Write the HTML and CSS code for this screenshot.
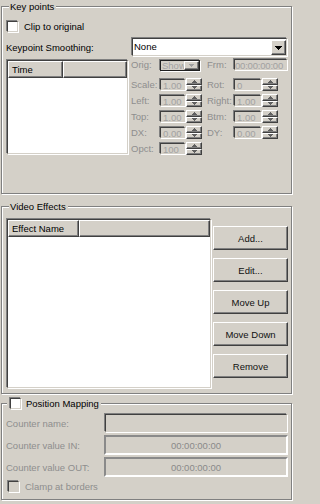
FILE: index.html
```html
<!DOCTYPE html>
<html>
<head>
<meta charset="utf-8">
<link rel="stylesheet" href="styles.css">
</head>
<body>
<div class="dlg">
  <div class="group kp">
    <div class="gtitle"><span>Key points</span></div>
    <div class="chkrow"><span class="chk sunken"></span><span>Clip to original</span></div>
    <div class="smooth-row">
      <span>Keypoint Smoothing:</span>
      <div class="dropdown sunken">
        <span class="dd-text">None</span>
        <span class="dd-btn raised"><svg width="7" height="4" viewBox="0 0 7 4"><path d="M0 0H7V1H6V2H5V3H4V4H3V3H2V2H1V1H0Z" fill="#000"/></svg></span>
      </div>
    </div>
    <div class="kp-main">
      <div class="list time-list sunken">
        <div class="lhead"><span class="hcell raised time-col">Time</span><span class="hcell raised hrest"></span></div>
      </div>
      <div class="props">
        <span class="plabel">Orig:</span>
        <div class="mini-combo sunken"><span class="val mc-text">Show</span><span class="mc-btn raised"><svg width="5" height="3" viewBox="0 0 5 3"><path d="M0 0H5V1H4V2H3V3H2V2H1V1H0Z" fill="#a0a0a0"/></svg></span></div>
        <span class="plabel pl2">Frm:</span>
        <div class="field frm sunken"><span class="val">00:00:00:00</span></div>

        <span class="plabel">Scale:</span>
        <div class="spin"><span class="spin-val sunken"><span class="val">1,00</span></span><span class="sb"><i class="raised"><svg width="5" height="3" viewBox="0 0 5 3"><path d="M2 0H3V1H4V2H5V3H0V2H1V1H2Z" fill="#606060"/></svg></i><i class="raised"><svg width="5" height="3" viewBox="0 0 5 3"><path d="M0 0H5V1H4V2H3V3H2V2H1V1H0Z" fill="#606060"/></svg></i></span></div>
        <span class="plabel pl2">Rot:</span>
        <div class="spin wide"><span class="spin-val sunken"><span class="val">0</span></span><span class="sb"><i class="raised"><svg width="5" height="3" viewBox="0 0 5 3"><path d="M2 0H3V1H4V2H5V3H0V2H1V1H2Z" fill="#606060"/></svg></i><i class="raised"><svg width="5" height="3" viewBox="0 0 5 3"><path d="M0 0H5V1H4V2H3V3H2V2H1V1H0Z" fill="#606060"/></svg></i></span></div>

        <span class="plabel">Left:</span>
        <div class="spin"><span class="spin-val sunken"><span class="val">1,00</span></span><span class="sb"><i class="raised"><svg width="5" height="3" viewBox="0 0 5 3"><path d="M2 0H3V1H4V2H5V3H0V2H1V1H2Z" fill="#606060"/></svg></i><i class="raised"><svg width="5" height="3" viewBox="0 0 5 3"><path d="M0 0H5V1H4V2H3V3H2V2H1V1H0Z" fill="#606060"/></svg></i></span></div>
        <span class="plabel pl2">Right:</span>
        <div class="spin wide"><span class="spin-val sunken"><span class="val">1,00</span></span><span class="sb"><i class="raised"><svg width="5" height="3" viewBox="0 0 5 3"><path d="M2 0H3V1H4V2H5V3H0V2H1V1H2Z" fill="#606060"/></svg></i><i class="raised"><svg width="5" height="3" viewBox="0 0 5 3"><path d="M0 0H5V1H4V2H3V3H2V2H1V1H0Z" fill="#606060"/></svg></i></span></div>

        <span class="plabel">Top:</span>
        <div class="spin"><span class="spin-val sunken"><span class="val">1,00</span></span><span class="sb"><i class="raised"><svg width="5" height="3" viewBox="0 0 5 3"><path d="M2 0H3V1H4V2H5V3H0V2H1V1H2Z" fill="#606060"/></svg></i><i class="raised"><svg width="5" height="3" viewBox="0 0 5 3"><path d="M0 0H5V1H4V2H3V3H2V2H1V1H0Z" fill="#606060"/></svg></i></span></div>
        <span class="plabel pl2">Btm:</span>
        <div class="spin wide"><span class="spin-val sunken"><span class="val">1,00</span></span><span class="sb"><i class="raised"><svg width="5" height="3" viewBox="0 0 5 3"><path d="M2 0H3V1H4V2H5V3H0V2H1V1H2Z" fill="#606060"/></svg></i><i class="raised"><svg width="5" height="3" viewBox="0 0 5 3"><path d="M0 0H5V1H4V2H3V3H2V2H1V1H0Z" fill="#606060"/></svg></i></span></div>

        <span class="plabel">DX:</span>
        <div class="spin"><span class="spin-val sunken"><span class="val">0,00</span></span><span class="sb"><i class="raised"><svg width="5" height="3" viewBox="0 0 5 3"><path d="M2 0H3V1H4V2H5V3H0V2H1V1H2Z" fill="#606060"/></svg></i><i class="raised"><svg width="5" height="3" viewBox="0 0 5 3"><path d="M0 0H5V1H4V2H3V3H2V2H1V1H0Z" fill="#606060"/></svg></i></span></div>
        <span class="plabel pl2">DY:</span>
        <div class="spin wide"><span class="spin-val sunken"><span class="val">0,00</span></span><span class="sb"><i class="raised"><svg width="5" height="3" viewBox="0 0 5 3"><path d="M2 0H3V1H4V2H5V3H0V2H1V1H2Z" fill="#606060"/></svg></i><i class="raised"><svg width="5" height="3" viewBox="0 0 5 3"><path d="M0 0H5V1H4V2H3V3H2V2H1V1H0Z" fill="#606060"/></svg></i></span></div>

        <span class="plabel">Opct:</span>
        <div class="spin"><span class="spin-val sunken"><span class="val">100</span></span><span class="sb"><i class="raised"><svg width="5" height="3" viewBox="0 0 5 3"><path d="M2 0H3V1H4V2H5V3H0V2H1V1H2Z" fill="#606060"/></svg></i><i class="raised"><svg width="5" height="3" viewBox="0 0 5 3"><path d="M0 0H5V1H4V2H3V3H2V2H1V1H0Z" fill="#606060"/></svg></i></span></div>
      </div>
    </div>
  </div>

  <div class="group ve">
    <div class="gtitle"><span>Video Effects</span></div>
    <div class="ve-main">
      <div class="list ve-list sunken">
        <div class="lhead"><span class="hcell raised effect-col">Effect Name</span><span class="hcell raised hrest"></span></div>
      </div>
      <div class="btns">
        <div class="btn raised">Add...</div>
        <div class="btn raised">Edit...</div>
        <div class="btn raised">Move Up</div>
        <div class="btn raised">Move Down</div>
        <div class="btn raised">Remove</div>
      </div>
    </div>
  </div>

  <div class="group pm">
    <div class="gtitle pm-title"><span class="chk sunken"></span><span>Position Mapping</span></div>
    <div class="pm-row"><span class="dlabel">Counter name:</span><div class="pfield first sunken"></div></div>
    <div class="pm-row"><span class="dlabel">Counter value IN:</span><div class="pfield flat"><span>00:00:00:00</span></div></div>
    <div class="pm-row"><span class="dlabel">Counter value OUT:</span><div class="pfield flat"><span>00:00:00:00</span></div></div>
    <div class="chkrow clamp"><span class="chk dis sunken"></span><span class="dlabel">Clamp at borders</span></div>
  </div>
</div>
</body>
</html>
```

FILE: styles.css
```css
* { box-sizing: border-box; }
html, body { margin: 0; padding: 0; }
body {
  width: 294px;
  height: 504px;
  overflow: hidden;
  background: #d4d0c8;
  font-family: "Liberation Sans", Arial, sans-serif;
  font-size: 9.5px;
  color: #000;
}
.dlg { padding: 6px 0 0 1px; }

.group {
  position: relative;
  width: 291px;
  border: 1px solid #808080;
  box-shadow: inset 1px 1px 0 #fff, 1px 1px 0 #fff;
}
.gtitle {
  position: absolute;
  top: -7px;
  left: 7px;
  height: 13px;
  padding: 0 2px 0 1px;
  background: #d4d0c8;
  display: flex;
  align-items: center;
  line-height: 13px;
  white-space: nowrap;
}
.pm-title { left: 5px; padding-left: 2px; }
.pm-title .chk { margin-right: 5px; }

.sunken {
  border: 1px solid;
  border-color: #404040 #d4d0c8 #d4d0c8 #404040;
  box-shadow: -1px -1px 0 #808080, 1px 1px 0 #fff;
  margin: 1px;
}
.raised {
  border: 1px solid;
  border-color: #fff #404040 #404040 #fff;
  box-shadow: inset -1px -1px 0 #808080;
  background: #d4d0c8;
}

.chk { width: 11px; height: 11px; background: #fff; flex: none; }
.chk.dis { background: #d4d0c8; }

/* Key points */
.kp { height: 188px; padding: 13px 3px 0 4px; }
.chkrow { display: flex; align-items: center; height: 13px; }
.chkrow .chk { margin-right: 6px; }

.smooth-row {
  margin-top: 4px;
  height: 20px;
  display: flex;
  align-items: center;
  justify-content: space-between;
}
.dropdown {
  width: 155px;
  height: 18px;
  background: #fff;
  display: flex;
  justify-content: space-between;
  padding-left: 1px;
}
.dd-text { line-height: 16px; }
.dd-btn {
  align-self: flex-end;
  width: 15px;
  height: 15px;
  display: flex;
  align-items: center;
  justify-content: center;
}

.kp-main { margin-top: 2px; display: flex; }
.list { background: #fff; flex: none; }
.time-list { width: 121px; height: 94px; margin-right: 3px; }
.lhead { display: flex; height: 17px; }
.hcell { height: 17px; line-height: 15px; padding-left: 3px; white-space: nowrap; }
.time-col { width: 55px; }
.effect-col { width: 71px; }
.hrest { flex: 1; }

.props {
  display: grid;
  grid-template-columns: 28px 43px 31px 55px;
  grid-template-rows: 20px repeat(5, 16px);
  align-items: start;
  margin-top: -1px;
}
.plabel { line-height: 13px; color: #8e8e8e; white-space: nowrap; }
.pl2 { padding-left: 5px; }
.val { color: #a2a2a2; line-height: 9px; white-space: nowrap; }

.mini-combo {
  width: 40px;
  height: 11px;
  margin-top: 2px;
  display: flex;
  background: #d4d0c8;
  border-color: #202020;
}
.mc-text { width: 23px; overflow: hidden; padding-left: 1px; }
.mc-btn {
  width: 15px;
  height: 9px;
  display: flex;
  align-items: center;
  justify-content: center;
}
.field { height: 11px; background: #d4d0c8; overflow: hidden; }
.frm { width: 53px; padding-left: 0; letter-spacing: -0.2px; }

.spin { display: flex; width: 43px; height: 13px; }
.spin.wide { width: 45px; }
.spin-val {
  flex: 1;
  height: 11px;
  background: #d4d0c8;
  padding-left: 2px;
  overflow: hidden;
}
.sb { width: 16px; height: 13px; display: flex; flex-direction: column; flex: none; }
.sb i {
  height: 6.5px;
  display: flex;
  align-items: center;
  justify-content: center;
}

/* Video Effects */
.ve { margin-top: 12px; height: 188px; padding: 11px 3px 0 4px; }
.ve-main { display: flex; }
.ve-list { width: 204px; height: 169px; }
.btns {
  margin-left: 1px;
  width: 75px;
  padding-top: 8px;
  display: flex;
  flex-direction: column;
  gap: 8px;
}
.btn {
  height: 24px;
  display: flex;
  align-items: center;
  justify-content: center;
  color: #101010;
}

/* Position Mapping */
.pm { margin-top: 9px; height: 97px; padding: 9px 3px 0 4px; }
.pm-row {
  display: flex;
  align-items: center;
  justify-content: space-between;
  height: 20px;
  margin-bottom: 2px;
}
.dlabel { color: #8e8e8e; white-space: nowrap; }
.pfield {
  width: 182px;
  height: 18px;
  background: #d4d0c8;
  display: flex;
  align-items: center;
  justify-content: center;
  color: #8a8a8a;
}
.pfield.flat {
  width: 184px;
  height: 20px;
  border: 2px solid;
  border-color: #8a8a8a #fff #fff #8a8a8a;
}
.clamp { margin-top: 3px; }
.clamp .chk { margin-left: 2px; }
```
